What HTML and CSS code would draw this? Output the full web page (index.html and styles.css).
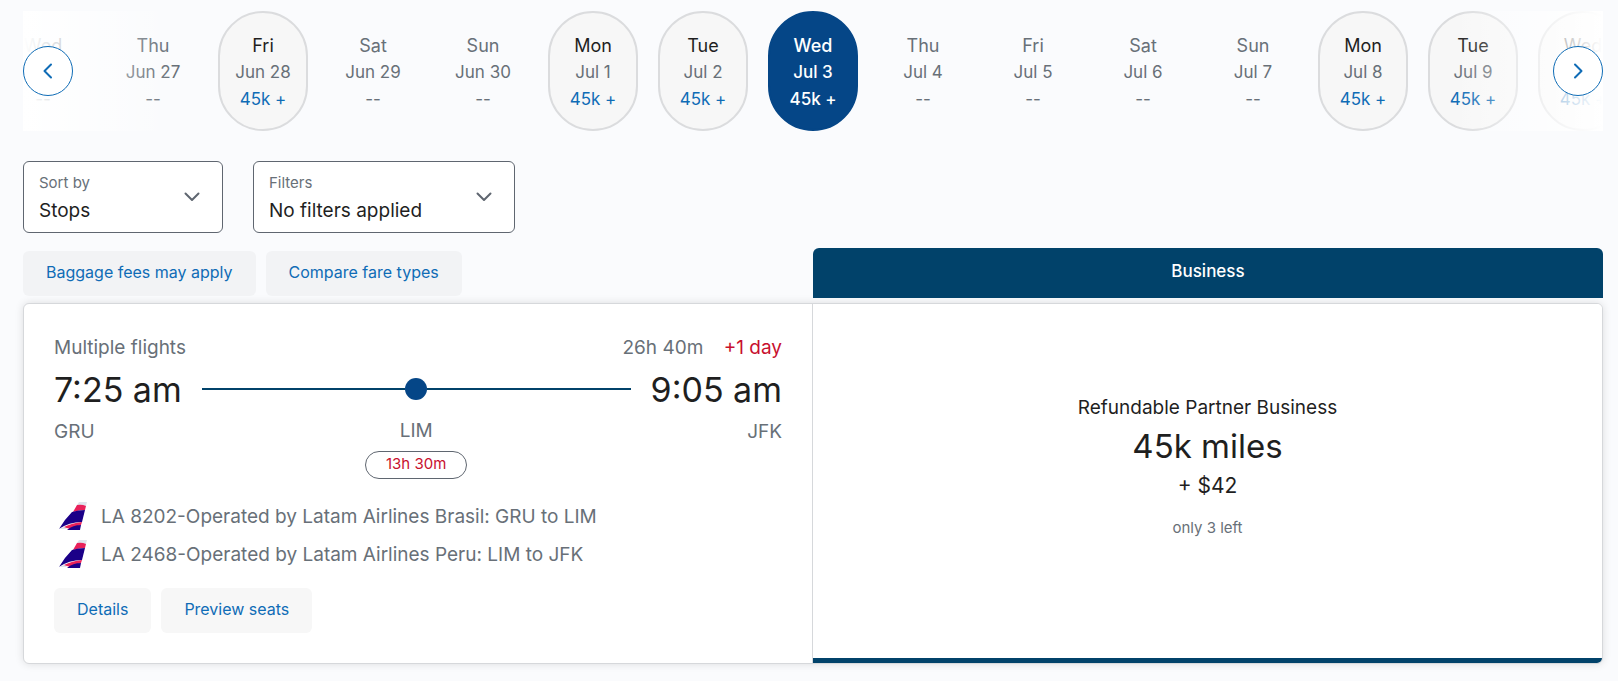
FILE: index.html
```html
<!DOCTYPE html>
<html lang="en">
<head>
    <meta charset="UTF-8">
    <meta name="viewport" content="width=device-width, initial-scale=1.0">
    <title>Choose flights</title>
    <link rel="stylesheet" href="styles.css">
</head>
<body>
    <nav class="date-ribbon" aria-label="Dates">
        <div class="dates">
            <button class="date" type="button"><span class="weekday">Wed</span><span>Jun 26</span><span class="price">--</span></button>
            <button class="date" type="button"><span class="weekday">Thu</span><span>Jun 27</span><span class="price">--</span></button>
            <button class="date available" type="button"><span class="weekday">Fri</span><span>Jun 28</span><span class="price">45k +</span></button>
            <button class="date" type="button"><span class="weekday">Sat</span><span>Jun 29</span><span class="price">--</span></button>
            <button class="date" type="button"><span class="weekday">Sun</span><span>Jun 30</span><span class="price">--</span></button>
            <button class="date available" type="button"><span class="weekday">Mon</span><span>Jul 1</span><span class="price">45k +</span></button>
            <button class="date available" type="button"><span class="weekday">Tue</span><span>Jul 2</span><span class="price">45k +</span></button>
            <button class="date selected" type="button" aria-pressed="true"><span class="weekday">Wed</span><span>Jul 3</span><span class="price">45k +</span></button>
            <button class="date" type="button"><span class="weekday">Thu</span><span>Jul 4</span><span class="price">--</span></button>
            <button class="date" type="button"><span class="weekday">Fri</span><span>Jul 5</span><span class="price">--</span></button>
            <button class="date" type="button"><span class="weekday">Sat</span><span>Jul 6</span><span class="price">--</span></button>
            <button class="date" type="button"><span class="weekday">Sun</span><span>Jul 7</span><span class="price">--</span></button>
            <button class="date available" type="button"><span class="weekday">Mon</span><span>Jul 8</span><span class="price">45k +</span></button>
            <button class="date available" type="button"><span class="weekday">Tue</span><span>Jul 9</span><span class="price">45k +</span></button>
            <button class="date available" type="button"><span class="weekday">Wed</span><span>Jul 10</span><span class="price">45k +</span></button>
        </div>
        <div class="fade fade-left"></div>
        <div class="fade fade-right"></div>
        <button class="arrow arrow-left" type="button" aria-label="Previous dates">
            <svg width="24" height="24" viewBox="0 0 24 24"><path d="M15 5.5 8.5 12l6.5 6.5"/></svg>
        </button>
        <button class="arrow arrow-right" type="button" aria-label="Next dates">
            <svg width="24" height="24" viewBox="0 0 24 24"><path d="M9 5.5 15.500 12 9 18.500"/></svg>
        </button>
    </nav>

    <div class="controls">
        <div class="field sort">
            <label for="sort">Sort by</label>
            <select id="sort">
                <option>Stops</option>
                <option>Price</option>
                <option>Duration</option>
            </select>
            <svg class="chevron" width="16" height="10" viewBox="0 0 16 10"><path d="M1.500 1.500 8 8l6.500-6.500"/></svg>
        </div>
        <div class="field filters">
            <label for="filters">Filters</label>
            <select id="filters">
                <option>No filters applied</option>
                <option>Nonstop</option>
            </select>
            <svg class="chevron" width="16" height="10" viewBox="0 0 16 10"><path d="M1.500 1.500 8 8l6.500-6.500"/></svg>
        </div>
    </div>

    <main>
        <div class="results-header">
            <div class="chips">
                <button class="chip" type="button">Baggage fees may apply</button>
                <button class="chip" type="button">Compare fare types</button>
            </div>
            <div class="fare-header">Business</div>
        </div>

        <div class="result">
            <section class="flight">
                <div class="summary">
                    <span>Multiple flights</span>
                    <span class="duration">26h 40m <span class="plus-day">+1 day</span></span>
                </div>
                <div class="route">
                    <div class="endpoint">
                        <div class="time">7:25 am</div>
                        <div>GRU</div>
                    </div>
                    <div class="stop">
                        <div class="track"><span class="line"></span><span class="dot"></span><span class="line"></span></div>
                        <div>LIM</div>
                        <div class="layover">13h 30m</div>
                    </div>
                    <div class="endpoint arrival">
                        <div class="time">9:05 am</div>
                        <div>JFK</div>
                    </div>
                </div>
                <ul class="segments">
                    <li>
                        <svg class="tail" width="28" height="28" viewBox="0 0 28 28">
                            <path fill="#dfe3ec" d="M20 0h8l-1 4-9-1z"/>
                            <path fill="#e9215a" d="M18 3q5-1 9 1l-1 4q-6 0-12 2z"/>
                            <path fill="#1b0088" d="M13 10q6-2 13-2l-3 12Q10 20 0 27 5 18 13 10z"/>
                            <path fill="#dfe3ec" d="M0 27q3-2 10-3l-3 3z"/>
                            <path fill="#e9215a" d="M5 25q8-4 18-5l-1 3q-6 1-11 4z"/>
                            <path fill="#1b0088" d="M8 28q6-5 14-5l-1 5z"/>
                        </svg>
                        LA 8202-Operated by Latam Airlines Brasil: GRU to LIM
                    </li>
                    <li>
                        <svg class="tail" width="28" height="28" viewBox="0 0 28 28">
                            <path fill="#dfe3ec" d="M20 0h8l-1 4-9-1z"/>
                            <path fill="#e9215a" d="M18 3q5-1 9 1l-1 4q-6 0-12 2z"/>
                            <path fill="#1b0088" d="M13 10q6-2 13-2l-3 12Q10 20 0 27 5 18 13 10z"/>
                            <path fill="#dfe3ec" d="M0 27q3-2 10-3l-3 3z"/>
                            <path fill="#e9215a" d="M5 25q8-4 18-5l-1 3q-6 1-11 4z"/>
                            <path fill="#1b0088" d="M8 28q6-5 14-5l-1 5z"/>
                        </svg>
                        LA 2468-Operated by Latam Airlines Peru: LIM to JFK
                    </li>
                </ul>
                <div class="chips">
                    <button class="chip" type="button">Details</button>
                    <button class="chip" type="button">Preview seats</button>
                </div>
            </section>
            <button class="fare" type="button">
                <span class="fare-name">Refundable Partner Business</span>
                <span class="miles">45k miles</span>
                <span class="cash">+ $42</span>
                <span class="left">only 3 left</span>
            </button>
        </div>
    </main>
</body>
</html>
```
FILE: styles.css
```css
* {
    box-sizing: border-box;
}
body {
    margin: 0;
    padding: 11px 15px 17px 23px;
    background: #fafbfd;
    color: #1f1f1f;
    font-family: Inter, "Liberation Sans", sans-serif;
    font-size: 19px;
    line-height: 27px;
}
button, select {
    font: inherit;
    color: inherit;
}
button {
    cursor: pointer;
}
svg {
    fill: none;
    stroke: currentColor;
    stroke-width: 2;
    stroke-linecap: round;
    stroke-linejoin: round;
}

/* dates */
.date-ribbon {
    position: relative;
    overflow: hidden;
}
.dates {
    display: flex;
    justify-content: center;
    gap: 20px;
}
.date {
    flex: 0 0 90px;
    height: 120px;
    display: flex;
    flex-direction: column;
    align-items: center;
    justify-content: center;
    padding: 2px 0 0;
    border: 2px solid transparent;
    border-radius: 45px;
    background: none;
    color: #687078;
    font-size: 17px;
    white-space: nowrap;
}
.weekday {
    font-size: 18px;
}
.date.available {
    background: #f7f7f7;
    border-color: #dbdcde;
}
.available .weekday {
    color: #1f1f1f;
}
.available .price {
    color: #0f6cb6;
}
.date.selected {
    background: #054687;
    border-color: #054687;
    color: #fff;
    font-weight: 500;
}
.fade {
    position: absolute;
    top: 0;
    bottom: 0;
    width: 150px;
    pointer-events: none;
}
.fade-left {
    left: 0;
    background: linear-gradient(to right, #fff, rgba(255,255,255,0));
}
.fade-right {
    right: 0;
    background: linear-gradient(to left, #fff, rgba(255,255,255,0));
}
.arrow {
    position: absolute;
    top: 35px;
    width: 50px;
    height: 50px;
    display: flex;
    align-items: center;
    justify-content: center;
    padding: 0;
    border: 1px solid #0f6cb6;
    border-radius: 50%;
    background: #fff;
    color: #0f6cb6;
}
.arrow-left {
    left: 0;
}
.arrow-right {
    right: 0;
}

/* sort and filters */
.controls {
    display: flex;
    gap: 30px;
    margin-top: 30px;
}
.field {
    display: grid;
    grid-template-columns: 1fr auto;
    align-items: center;
    padding: 7px 22px 7px 15px;
    border: 1px solid #5f6670;
    border-radius: 6px;
    background: #fff;
}
.sort {
    width: 200px;
}
.filters {
    width: 262px;
}
.field label {
    grid-area: 1 / 1;
    color: #687078;
    font-size: 15px;
}
.field select {
    grid-area: 2 / 1;
    height: 29px;
    padding: 0;
    border: 0;
    background: none;
    appearance: none;
}
.chevron {
    grid-area: 1 / 2 / 3 / 3;
    color: #5f6670;
}

/* results */
.results-header {
    display: grid;
    grid-template-columns: 1fr 1fr;
    align-items: end;
    margin: 15px 0 5px;
}
.chips {
    display: flex;
    gap: 10px;
}
.results-header .chips {
    padding-bottom: 2px;
}
.chip {
    height: 45px;
    padding: 0 23px 3px;
    border: 0;
    border-radius: 6px;
    background: #f7f7f7;
    color: #0f6cb6;
    font-size: 16px;
}
.results-header .chip {
    background: #f2f3f5;
}
.fare-header {
    padding: 10px 0 13px;
    border-radius: 6px 6px 0 0;
    background: #01426a;
    color: #fff;
    font-size: 17px;
    font-weight: 500;
    text-align: center;
}
.result {
    display: grid;
    grid-template-columns: 1fr 1fr;
    border: 1px solid #d6d8db;
    border-radius: 6px;
    background: #fff;
    box-shadow: 0 0 8px rgba(0,0,0,0.12);
    overflow: hidden;
}
.flight {
    padding: 30px;
    border-right: 1px solid #d6d8db;
    color: #687078;
}
.summary {
    display: flex;
    justify-content: space-between;
}
.plus-day {
    margin-left: 15px;
    color: #c8102e;
}
.route {
    display: grid;
    grid-template-columns: auto 1fr auto;
    gap: 20px;
}
.time {
    color: #1f1f1f;
    font-size: 34px;
    line-height: 57px;
}
.arrival {
    text-align: right;
}
.stop {
    display: flex;
    flex-direction: column;
    align-items: center;
}
.track {
    align-self: stretch;
    display: flex;
    align-items: center;
    height: 56px;
}
.line {
    flex: 1;
    height: 2px;
    background: #01426a;
}
.dot {
    width: 22px;
    height: 22px;
    border-radius: 50%;
    background: #054687;
}
.layover {
    margin-top: 7px;
    padding: 0 20px 2px;
    border: 1px solid #5f6670;
    border-radius: 14px;
    color: #c8102e;
    font-size: 15px;
    line-height: 24px;
}
.segments {
    margin: 18px 0 15px;
    padding: 0;
    list-style: none;
}
.segments li {
    display: flex;
    align-items: center;
    gap: 14px;
    height: 38px;
    padding-left: 5px;
}
.tail {
    stroke: none;
}
.fare {
    display: flex;
    flex-direction: column;
    align-items: center;
    justify-content: center;
    padding: 0 0 28px;
    border: 0;
    border-bottom: 5px solid #01426a;
    background: #fff;
}
.miles {
    font-size: 33px;
    line-height: 51px;
}
.cash {
    font-size: 21px;
}
.left {
    margin-top: 15px;
    color: #687078;
    font-size: 15px;
}
```
